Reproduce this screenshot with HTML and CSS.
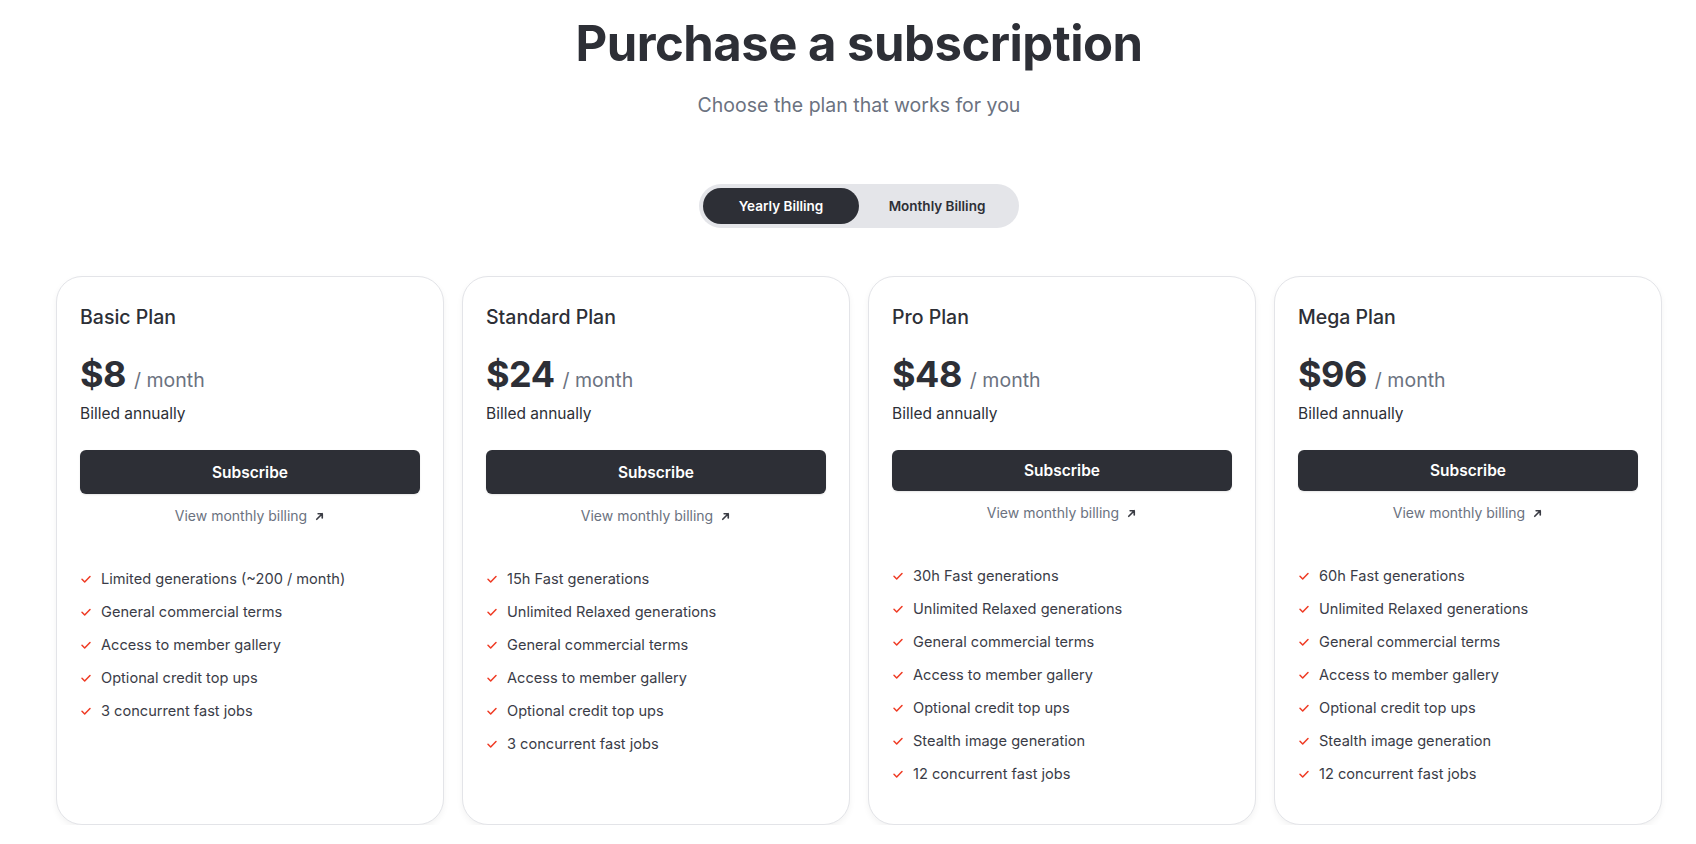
FILE: index.html
```html
<!DOCTYPE html>
<html lang="en">
<head>
<meta charset="utf-8">
<title>Purchase a subscription</title>
<link rel="stylesheet" href="styles.css">
</head>
<body>
<main class="page">
  <header class="hero">
    <h1 class="title">Purchase a subscription</h1>
    <p class="subtitle">Choose the plan that works for you</p>
  </header>

  <div class="toggle-wrap">
    <div class="toggle">
      <button class="toggle-btn active">Yearly Billing</button>
      <button class="toggle-btn">Monthly Billing</button>
    </div>
  </div>

  <section class="plans">
    <article class="card">
      <h2 class="plan-name">Basic Plan</h2>
      <div class="price"><span class="amount">$8</span><span class="per">/ month</span></div>
      <p class="billed">Billed annually</p>
      <button class="subscribe">Subscribe</button>
      <a class="monthly-link" href="#">View monthly billing <svg class="arrow" viewBox="0 0 12 12" width="11" height="11"><path d="M3 9L9 3M4.5 3H9V7.5" fill="none" stroke="currentColor" stroke-width="1.8" stroke-linecap="round" stroke-linejoin="round"/></svg></a>
      <ul class="features">
        <li><svg class="check" viewBox="0 0 12 12"><path d="M2 6.3L4.7 9L10 3.5" fill="none" stroke="currentColor" stroke-width="1.5" stroke-linecap="round" stroke-linejoin="round"/></svg>Limited generations (~200 / month)</li>
        <li><svg class="check" viewBox="0 0 12 12"><path d="M2 6.3L4.7 9L10 3.5" fill="none" stroke="currentColor" stroke-width="1.5" stroke-linecap="round" stroke-linejoin="round"/></svg>General commercial terms</li>
        <li><svg class="check" viewBox="0 0 12 12"><path d="M2 6.3L4.7 9L10 3.5" fill="none" stroke="currentColor" stroke-width="1.5" stroke-linecap="round" stroke-linejoin="round"/></svg>Access to member gallery</li>
        <li><svg class="check" viewBox="0 0 12 12"><path d="M2 6.3L4.7 9L10 3.5" fill="none" stroke="currentColor" stroke-width="1.5" stroke-linecap="round" stroke-linejoin="round"/></svg>Optional credit top ups</li>
        <li><svg class="check" viewBox="0 0 12 12"><path d="M2 6.3L4.7 9L10 3.5" fill="none" stroke="currentColor" stroke-width="1.5" stroke-linecap="round" stroke-linejoin="round"/></svg>3 concurrent fast jobs</li>
      </ul>
    </article>

    <article class="card">
      <h2 class="plan-name">Standard Plan</h2>
      <div class="price"><span class="amount">$24</span><span class="per">/ month</span></div>
      <p class="billed">Billed annually</p>
      <button class="subscribe">Subscribe</button>
      <a class="monthly-link" href="#">View monthly billing <svg class="arrow" viewBox="0 0 12 12" width="11" height="11"><path d="M3 9L9 3M4.5 3H9V7.5" fill="none" stroke="currentColor" stroke-width="1.8" stroke-linecap="round" stroke-linejoin="round"/></svg></a>
      <ul class="features">
        <li><svg class="check" viewBox="0 0 12 12"><path d="M2 6.3L4.7 9L10 3.5" fill="none" stroke="currentColor" stroke-width="1.5" stroke-linecap="round" stroke-linejoin="round"/></svg>15h Fast generations</li>
        <li><svg class="check" viewBox="0 0 12 12"><path d="M2 6.3L4.7 9L10 3.5" fill="none" stroke="currentColor" stroke-width="1.5" stroke-linecap="round" stroke-linejoin="round"/></svg>Unlimited Relaxed generations</li>
        <li><svg class="check" viewBox="0 0 12 12"><path d="M2 6.3L4.7 9L10 3.5" fill="none" stroke="currentColor" stroke-width="1.5" stroke-linecap="round" stroke-linejoin="round"/></svg>General commercial terms</li>
        <li><svg class="check" viewBox="0 0 12 12"><path d="M2 6.3L4.7 9L10 3.5" fill="none" stroke="currentColor" stroke-width="1.5" stroke-linecap="round" stroke-linejoin="round"/></svg>Access to member gallery</li>
        <li><svg class="check" viewBox="0 0 12 12"><path d="M2 6.3L4.7 9L10 3.5" fill="none" stroke="currentColor" stroke-width="1.5" stroke-linecap="round" stroke-linejoin="round"/></svg>Optional credit top ups</li>
        <li><svg class="check" viewBox="0 0 12 12"><path d="M2 6.3L4.7 9L10 3.5" fill="none" stroke="currentColor" stroke-width="1.5" stroke-linecap="round" stroke-linejoin="round"/></svg>3 concurrent fast jobs</li>
      </ul>
    </article>

    <article class="card">
      <h2 class="plan-name">Pro Plan</h2>
      <div class="price"><span class="amount">$48</span><span class="per">/ month</span></div>
      <p class="billed">Billed annually</p>
      <button class="subscribe">Subscribe</button>
      <a class="monthly-link" href="#">View monthly billing <svg class="arrow" viewBox="0 0 12 12" width="11" height="11"><path d="M3 9L9 3M4.5 3H9V7.5" fill="none" stroke="currentColor" stroke-width="1.8" stroke-linecap="round" stroke-linejoin="round"/></svg></a>
      <ul class="features">
        <li><svg class="check" viewBox="0 0 12 12"><path d="M2 6.3L4.7 9L10 3.5" fill="none" stroke="currentColor" stroke-width="1.5" stroke-linecap="round" stroke-linejoin="round"/></svg>30h Fast generations</li>
        <li><svg class="check" viewBox="0 0 12 12"><path d="M2 6.3L4.7 9L10 3.5" fill="none" stroke="currentColor" stroke-width="1.5" stroke-linecap="round" stroke-linejoin="round"/></svg>Unlimited Relaxed generations</li>
        <li><svg class="check" viewBox="0 0 12 12"><path d="M2 6.3L4.7 9L10 3.5" fill="none" stroke="currentColor" stroke-width="1.5" stroke-linecap="round" stroke-linejoin="round"/></svg>General commercial terms</li>
        <li><svg class="check" viewBox="0 0 12 12"><path d="M2 6.3L4.7 9L10 3.5" fill="none" stroke="currentColor" stroke-width="1.5" stroke-linecap="round" stroke-linejoin="round"/></svg>Access to member gallery</li>
        <li><svg class="check" viewBox="0 0 12 12"><path d="M2 6.3L4.7 9L10 3.5" fill="none" stroke="currentColor" stroke-width="1.5" stroke-linecap="round" stroke-linejoin="round"/></svg>Optional credit top ups</li>
        <li><svg class="check" viewBox="0 0 12 12"><path d="M2 6.3L4.7 9L10 3.5" fill="none" stroke="currentColor" stroke-width="1.5" stroke-linecap="round" stroke-linejoin="round"/></svg>Stealth image generation</li>
        <li><svg class="check" viewBox="0 0 12 12"><path d="M2 6.3L4.7 9L10 3.5" fill="none" stroke="currentColor" stroke-width="1.5" stroke-linecap="round" stroke-linejoin="round"/></svg>12 concurrent fast jobs</li>
      </ul>
    </article>

    <article class="card">
      <h2 class="plan-name">Mega Plan</h2>
      <div class="price"><span class="amount">$96</span><span class="per">/ month</span></div>
      <p class="billed">Billed annually</p>
      <button class="subscribe">Subscribe</button>
      <a class="monthly-link" href="#">View monthly billing <svg class="arrow" viewBox="0 0 12 12" width="11" height="11"><path d="M3 9L9 3M4.5 3H9V7.5" fill="none" stroke="currentColor" stroke-width="1.8" stroke-linecap="round" stroke-linejoin="round"/></svg></a>
      <ul class="features">
        <li><svg class="check" viewBox="0 0 12 12"><path d="M2 6.3L4.7 9L10 3.5" fill="none" stroke="currentColor" stroke-width="1.5" stroke-linecap="round" stroke-linejoin="round"/></svg>60h Fast generations</li>
        <li><svg class="check" viewBox="0 0 12 12"><path d="M2 6.3L4.7 9L10 3.5" fill="none" stroke="currentColor" stroke-width="1.5" stroke-linecap="round" stroke-linejoin="round"/></svg>Unlimited Relaxed generations</li>
        <li><svg class="check" viewBox="0 0 12 12"><path d="M2 6.3L4.7 9L10 3.5" fill="none" stroke="currentColor" stroke-width="1.5" stroke-linecap="round" stroke-linejoin="round"/></svg>General commercial terms</li>
        <li><svg class="check" viewBox="0 0 12 12"><path d="M2 6.3L4.7 9L10 3.5" fill="none" stroke="currentColor" stroke-width="1.5" stroke-linecap="round" stroke-linejoin="round"/></svg>Access to member gallery</li>
        <li><svg class="check" viewBox="0 0 12 12"><path d="M2 6.3L4.7 9L10 3.5" fill="none" stroke="currentColor" stroke-width="1.5" stroke-linecap="round" stroke-linejoin="round"/></svg>Optional credit top ups</li>
        <li><svg class="check" viewBox="0 0 12 12"><path d="M2 6.3L4.7 9L10 3.5" fill="none" stroke="currentColor" stroke-width="1.5" stroke-linecap="round" stroke-linejoin="round"/></svg>Stealth image generation</li>
        <li><svg class="check" viewBox="0 0 12 12"><path d="M2 6.3L4.7 9L10 3.5" fill="none" stroke="currentColor" stroke-width="1.5" stroke-linecap="round" stroke-linejoin="round"/></svg>12 concurrent fast jobs</li>
      </ul>
    </article>
  </section>
</main>
</body>
</html>
```

FILE: styles.css
```css
* { box-sizing: border-box; }
html, body { margin: 0; padding: 0; background: #ffffff; }
body {
  font-family: Inter, "Noto Sans", "Liberation Sans", sans-serif;
  color: #2d2f36;
  overflow: hidden;
}
.page {
  padding: 0 34px 0 56px;
}
.hero {
  text-align: center;
  padding-top: 12px;
}
.title {
  margin: 0;
  font-size: 49px;
  line-height: 64px;
  font-weight: 700;
  letter-spacing: -0.5px;
  color: #2d2f36;
}
.subtitle {
  margin: 17px 0 0;
  font-size: 19.5px;
  line-height: 24px;
  color: #6b7280;
}
.toggle-wrap {
  display: flex;
  justify-content: center;
  margin-top: 67px;
}
.toggle {
  display: flex;
  width: 320px;
  height: 44px;
  padding: 4px;
  gap: 0;
  background: #e4e5e9;
  border-radius: 22px;
}
.toggle-btn {
  flex: 0 0 156px;
  height: 36px;
  border: 0;
  border-radius: 18px;
  background: transparent;
  font-family: inherit;
  font-size: 13.5px;
  font-weight: 600;
  color: #2d2f36;
  cursor: pointer;
}
.toggle-btn.active {
  background: #2d2f36;
  color: #ffffff;
}
.plans {
  display: grid;
  grid-template-columns: repeat(4, 1fr);
  gap: 18px;
  margin-top: 48px;
}
.card {
  height: 549px;
  border: 1px solid #e3e4e8;
  border-radius: 26px;
  padding: 27px 23px 40px;
  background: #fff;
  box-shadow: 0 3px 6px rgba(0, 0, 0, 0.05);
  display: flex;
  flex-direction: column;
}
.plan-name {
  margin: 0;
  font-size: 19.5px;
  line-height: 26px;
  font-weight: 500;
  color: #2d2f36;
}
.price {
  display: flex;
  align-items: baseline;
  margin-top: 21px;
  height: 46px;
}
.amount {
  font-size: 36px;
  font-weight: 700;
  line-height: 46px;
  color: #2d2f36;
  letter-spacing: -0.5px;
}
.per {
  margin-left: 8px;
  font-size: 19.5px;
  color: #6b7280;
}
.billed {
  margin: 6px 0 0;
  font-size: 15.5px;
  line-height: 22px;
  color: #2d2f36;
}
.subscribe {
  margin-top: 25px;
  height: 44px;
  width: 100%;
  border: 0;
  border-radius: 6px;
  background: #2d2f36;
  color: #fff;
  font-family: inherit;
  font-size: 15.5px;
  font-weight: 600;
  box-shadow: 0 1px 2px rgba(0,0,0,0.1);
}
.monthly-link {
  margin-top: 12px;
  align-self: center;
  display: flex;
  align-items: center;
  gap: 7px;
  font-size: 14px;
  line-height: 20px;
  color: #6b7280;
  text-decoration: none;
}
.arrow { color: #3a3c44; }
.features {
  list-style: none;
  margin: 43px 0 0;
  padding: 0;
  display: flex;
  flex-direction: column;
  gap: 13px;
}
.features li {
  display: flex;
  align-items: center;
  font-size: 14.6px;
  line-height: 20px;
  color: #3a3c47;
}
.check {
  width: 12px;
  height: 12px;
  margin-right: 9px;
  color: #ef3b24;
  flex: 0 0 12px;
}
```
